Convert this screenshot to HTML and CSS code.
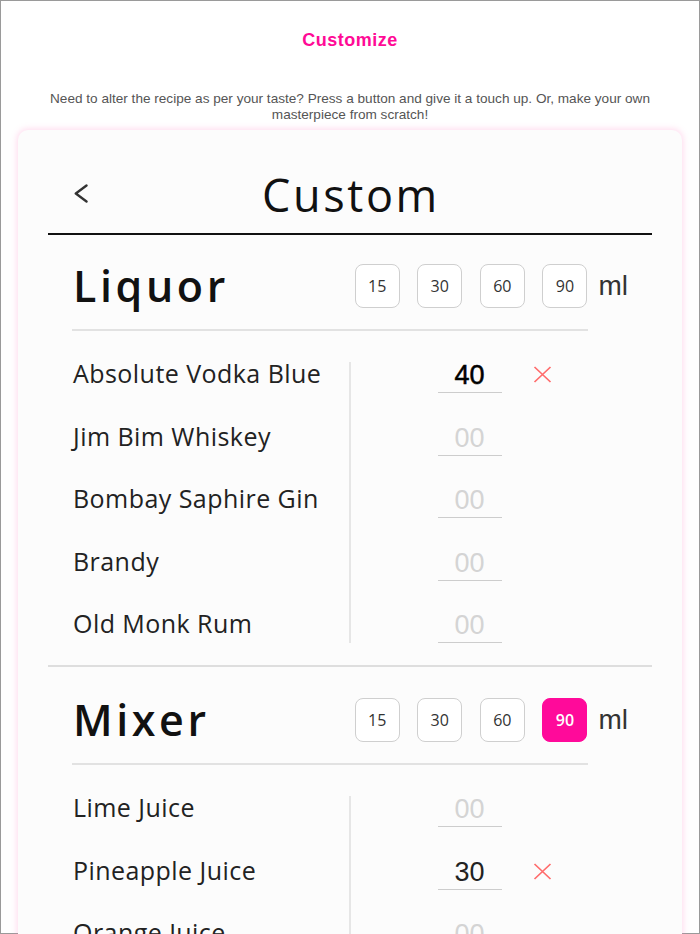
FILE: index.html
```html
<!DOCTYPE html>
<html lang="en">
<head>
<meta charset="utf-8">
<title>Customize</title>
<link rel="stylesheet" href="styles.css">
</head>
<body>
<div class="frame">
  <h1 class="page-title">Customize</h1>
  <p class="intro">Need to alter the recipe as per your taste? Press a button and give it a touch up. Or, make your own masterpiece from scratch!</p>

  <div class="card">
    <div class="card-head">
      <button class="back" aria-label="Back">
        <svg width="14" height="19" viewBox="0 0 14 19"><polyline points="12.5,1.5 1.8,9.5 12.5,17.5" fill="none" stroke="#333" stroke-width="2.4" stroke-linecap="round" stroke-linejoin="round"/></svg>
      </button>
      <h2 class="card-title">Custom</h2>
      <span></span>
    </div>
    <div class="head-rule"></div>

    <section class="group">
      <div class="group-head">
        <h3 class="group-title">Liquor</h3>
        <div class="sizes">
          <button class="size">15</button>
          <button class="size">30</button>
          <button class="size">60</button>
          <button class="size">90</button>
          <span class="unit">ml</span>
        </div>
      </div>
      <div class="sub-rule"></div>
      <div class="list">
        <div class="names">
          <div class="name">Absolute Vodka Blue</div>
          <div class="name">Jim Bim Whiskey</div>
          <div class="name">Bombay Saphire Gin</div>
          <div class="name">Brandy</div>
          <div class="name">Old Monk Rum</div>
        </div>
        <div class="values">
          <div class="value"><span class="amount filled strong">40</span><span class="remove"><svg width="19" height="17" viewBox="0 0 19 17"><path d="M1.5 1 L17.5 16 M17.5 1 L1.5 16" stroke="#ff6b6b" stroke-width="1.7" fill="none"/></svg></span></div>
          <div class="value"><span class="amount">00</span></div>
          <div class="value"><span class="amount">00</span></div>
          <div class="value"><span class="amount">00</span></div>
          <div class="value"><span class="amount">00</span></div>
        </div>
      </div>
    </section>

    <div class="sep-rule"></div>

    <section class="group">
      <div class="group-head">
        <h3 class="group-title">Mixer</h3>
        <div class="sizes">
          <button class="size">15</button>
          <button class="size">30</button>
          <button class="size">60</button>
          <button class="size active">90</button>
          <span class="unit">ml</span>
        </div>
      </div>
      <div class="sub-rule"></div>
      <div class="list">
        <div class="names">
          <div class="name">Lime Juice</div>
          <div class="name">Pineapple Juice</div>
          <div class="name">Orange Juice</div>
          <div class="name">Cranberry Juice</div>
          <div class="name">Tonic Water</div>
        </div>
        <div class="values">
          <div class="value"><span class="amount">00</span></div>
          <div class="value"><span class="amount filled">30</span><span class="remove"><svg width="19" height="17" viewBox="0 0 19 17"><path d="M1.5 1 L17.5 16 M17.5 1 L1.5 16" stroke="#ff6b6b" stroke-width="1.7" fill="none"/></svg></span></div>
          <div class="value"><span class="amount">00</span></div>
          <div class="value"><span class="amount">00</span></div>
          <div class="value"><span class="amount">00</span></div>
        </div>
      </div>
    </section>
  </div>
</div>
</body>
</html>
```

FILE: styles.css
```css
* { box-sizing: border-box; }

html, body {
  margin: 0;
  padding: 0;
  background: #fff;
}

.frame {
  height: 934px;
  border: 1px solid #9a9a9a;
  padding-top: 29px;
  font-family: "Liberation Sans", Arial, sans-serif;
}

.page-title {
  margin: 0;
  text-align: center;
  font-size: 18px;
  line-height: 21px;
  font-weight: 700;
  letter-spacing: 0.5px;
  color: #ff0a96;
}

.intro {
  margin: 40px 0 0;
  padding: 0 40px;
  text-align: center;
  font-size: 13.6px;
  line-height: 16px;
  color: #555;
}

.card {
  margin: 7px 17px 0;
  padding: 35px 30px 40px;
  background: #fcfcfc;
  border-radius: 10px;
  box-shadow: 0 0 6px 1px rgba(255, 120, 190, 0.28);
  font-family: "Open Sans", "Noto Sans", sans-serif;
  position: relative;
}

.card-head {
  display: grid;
  grid-template-columns: 1fr auto 1fr;
  align-items: center;
  height: 60px;
}

.back {
  justify-self: start;
  margin: -4px 0 0 26px;
  padding: 0;
  border: 0;
  background: none;
  display: flex;
}

.card-title {
  margin: 0 0 0 2px;
  font-size: 45px;
  line-height: 60px;
  font-weight: 400;
  letter-spacing: 2.6px;
  color: #111;
}

.head-rule {
  margin-top: 8px;
  height: 2px;
  background: #111;
}

.group {
  padding-top: 29px;
}

.group-head {
  display: flex;
  align-items: center;
  justify-content: space-between;
  margin: 0 24px 0 25px;
  height: 44px;
}

.group-title {
  margin: 0;
  font-size: 43px;
  line-height: 44px;
  font-weight: 600;
  letter-spacing: 3.6px;
  color: #111;
}

.sizes {
  display: flex;
  align-items: center;
  gap: 17.6px;
}

.size {
  width: 45px;
  height: 44px;
  padding: 0;
  border: 1px solid #cfcfcf;
  border-radius: 8px;
  background: #fff;
  font-family: "Open Sans", sans-serif;
  font-size: 16px;
  color: #333;
}

.size.active {
  background: #ff0a9a;
  border-color: #ff0a9a;
  color: #fff;
  font-weight: 600;
}

.unit {
  margin-left: -6.6px;
  font-family: "Liberation Sans", Arial, sans-serif;
  font-size: 28px;
  color: #333;
}

.sub-rule {
  margin: 21px 64px 0 24px;
  height: 2px;
  background: #e2e2e2;
}

.list {
  display: flex;
  margin: 31px 64px 0 24px;
}

.names {
  width: 277px;
  display: flex;
  flex-direction: column;
  gap: 31.5px;
}

.name {
  height: 31px;
  padding-left: 1px;
  font-size: 25px;
  line-height: 23px;
  letter-spacing: 0.45px;
  color: #222;
  white-space: nowrap;
}

.values {
  flex: 1;
  border-left: 2px solid #e6e6e6;
  display: flex;
  flex-direction: column;
  gap: 31.5px;
}

.value {
  height: 31px;
  display: grid;
  grid-template-columns: 1fr 64px 1fr;
}

.amount {
  grid-column: 2;
  height: 31px;
  border-bottom: 1px solid #cdcdcd;
  text-align: center;
  font-family: "Liberation Sans", Arial, sans-serif;
  font-size: 27px;
  line-height: 26px;
  color: #d4d4d4;
}

.amount.filled {
  color: #222;
}

.amount.strong {
  color: #000;
  -webkit-text-stroke: 0.5px #000;
}

.remove {
  grid-column: 3;
  padding: 4px 0 0 31px;
  display: flex;
  align-items: flex-start;
}

.sep-rule {
  margin-top: 22px;
  height: 2px;
  background: #dedede;
}

.group + .sep-rule + .group {
  padding-top: 31px;
}
```
